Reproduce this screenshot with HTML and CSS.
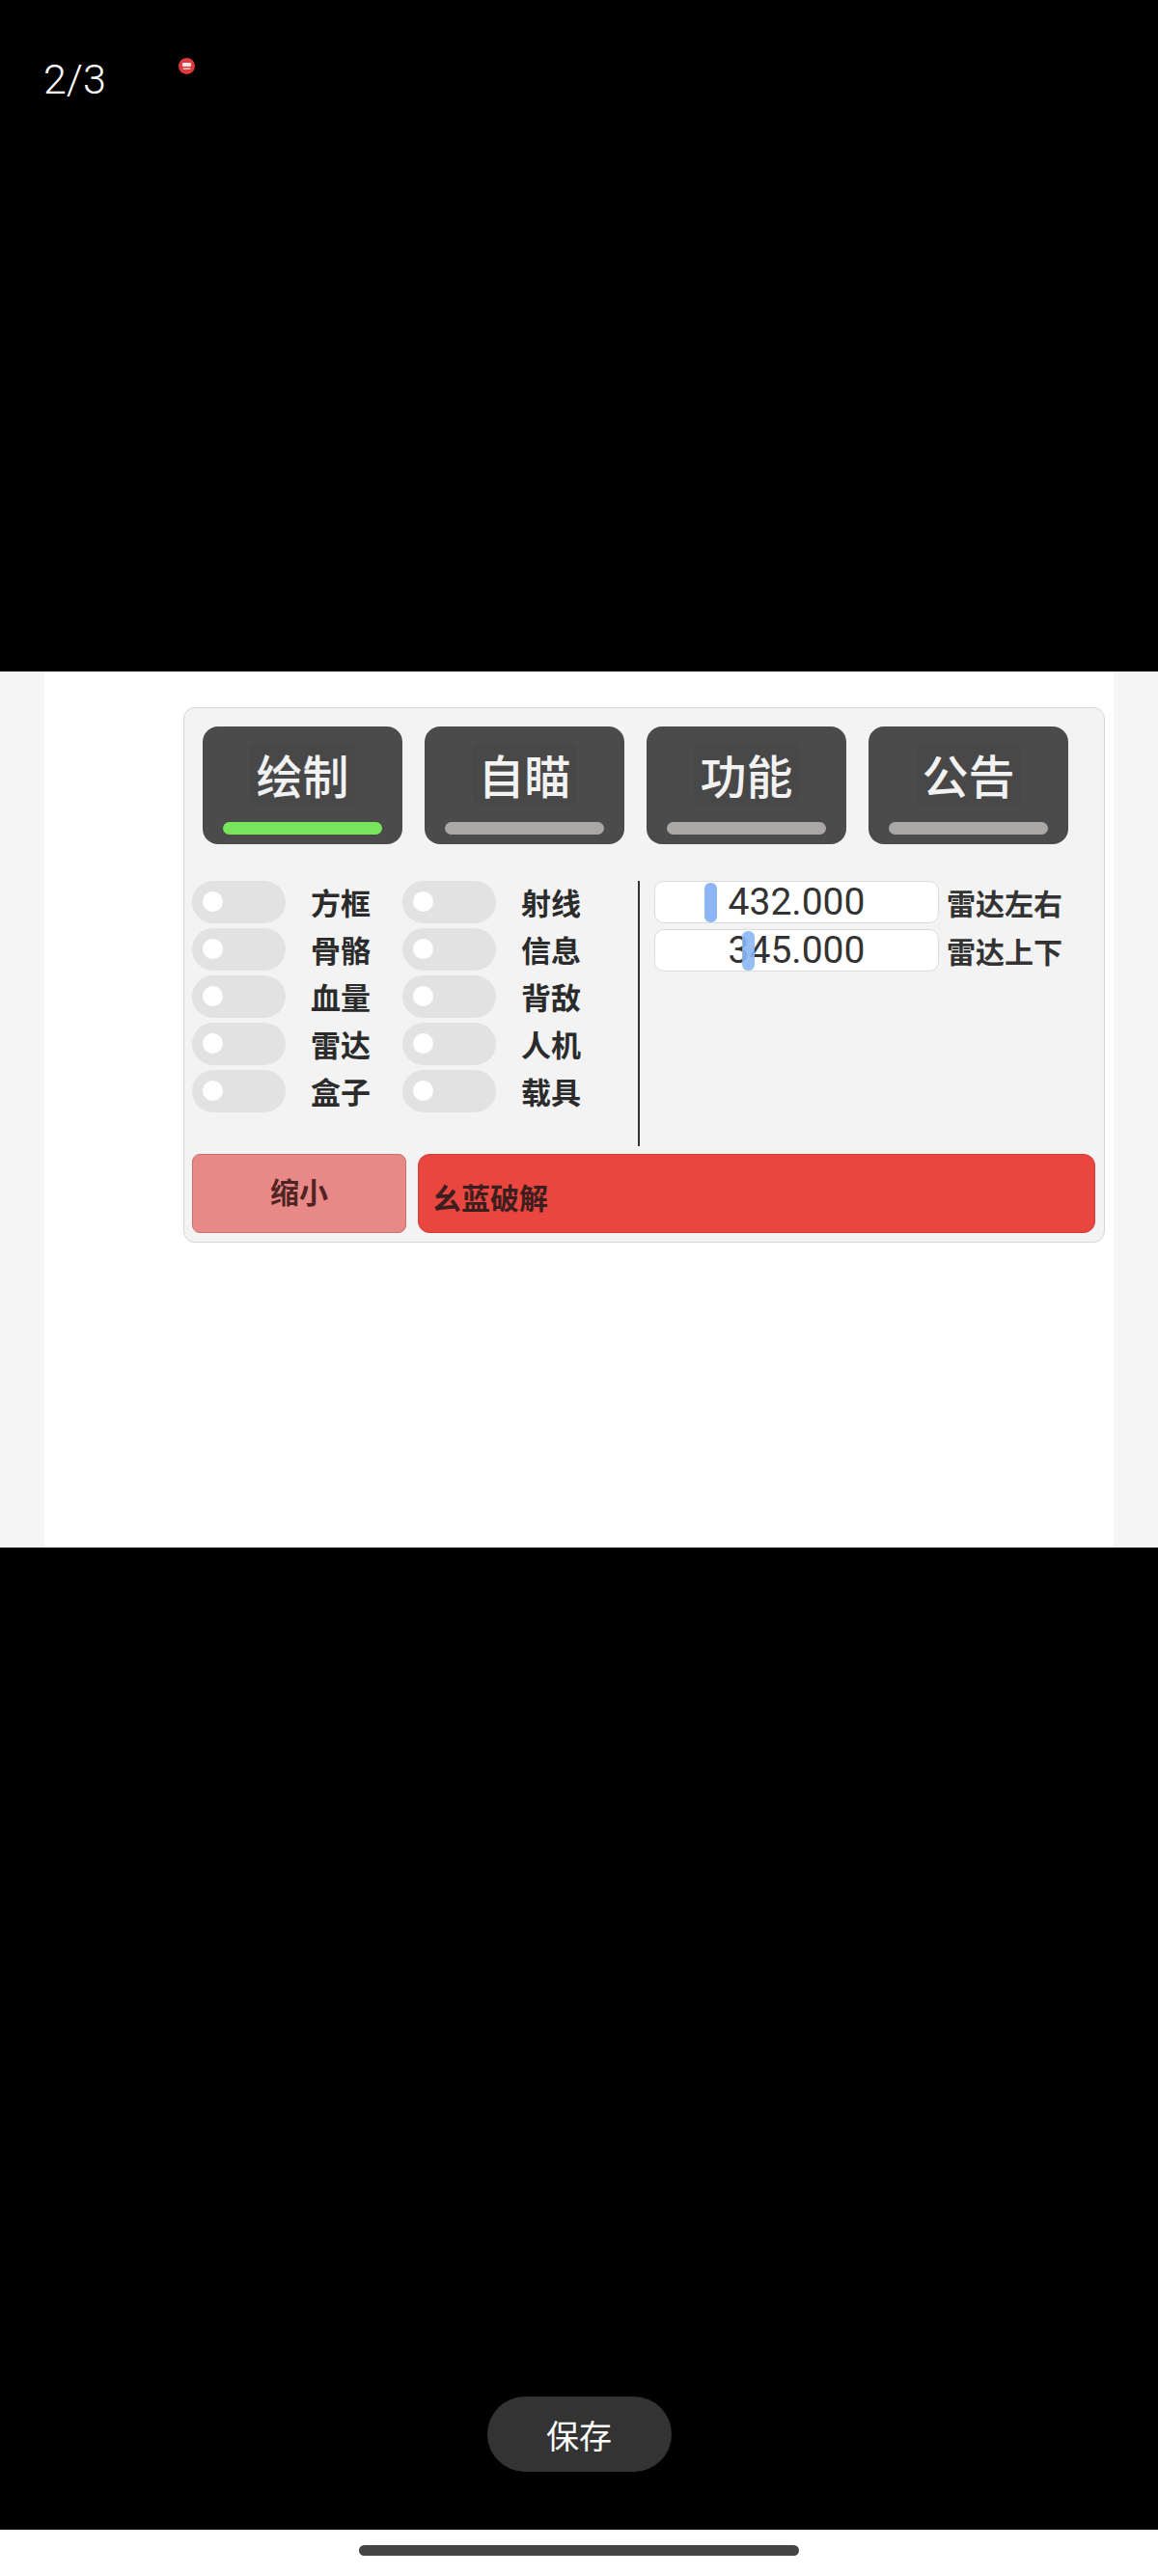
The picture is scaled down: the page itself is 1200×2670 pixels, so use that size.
FILE: index.html
```html
<!DOCTYPE html>
<html lang="zh-CN">
<head>
  <meta charset="UTF-8">
  <title>2/3</title>
  <link rel="stylesheet" href="styles.css">
</head>
<body>
  <header class="viewer-top">
    <span class="page-count">2/3</span>
    <svg class="app-dot" width="17" height="17" viewBox="0 0 17 17">
      <circle cx="8.5" cy="8.5" r="8.5" fill="#e0393c"/>
      <rect x="4" y="5" width="9" height="4" rx="1" fill="#fbe3e3"/>
      <rect x="4.5" y="10.5" width="8" height="1.6" rx="0.8" fill="#f7c9c9"/>
    </svg>
  </header>

  <!-- Screenshot area -->
  <section class="shot">
    <div class="shot-side"></div>
    <div class="shot-main">
      <div class="panel">
        <div class="tabs">
          <div class="tab">
            <span class="tab-label">绘制</span>
            <span class="tab-bar active"></span>
          </div>
          <div class="tab">
            <span class="tab-label">自瞄</span>
            <span class="tab-bar"></span>
          </div>
          <div class="tab">
            <span class="tab-label">功能</span>
            <span class="tab-bar"></span>
          </div>
          <div class="tab">
            <span class="tab-label">公告</span>
            <span class="tab-bar"></span>
          </div>
        </div>

        <div class="panel-body">
          <div class="switches">
            <div class="switch-item"><span class="toggle"></span><span class="switch-label">方框</span></div>
            <div class="switch-item"><span class="toggle"></span><span class="switch-label">射线</span></div>
            <div class="switch-item"><span class="toggle"></span><span class="switch-label">骨骼</span></div>
            <div class="switch-item"><span class="toggle"></span><span class="switch-label">信息</span></div>
            <div class="switch-item"><span class="toggle"></span><span class="switch-label">血量</span></div>
            <div class="switch-item"><span class="toggle"></span><span class="switch-label">背敌</span></div>
            <div class="switch-item"><span class="toggle"></span><span class="switch-label">雷达</span></div>
            <div class="switch-item"><span class="toggle"></span><span class="switch-label">人机</span></div>
            <div class="switch-item"><span class="toggle"></span><span class="switch-label">盒子</span></div>
            <div class="switch-item"><span class="toggle"></span><span class="switch-label">载具</span></div>
          </div>

          <div class="divider"></div>

          <div class="fields">
            <div class="field">
              <div class="field-box">
                <span class="caret caret-one"></span>
                <span class="field-value">432.000</span>
              </div>
              <span class="field-label">雷达左右</span>
            </div>
            <div class="field">
              <div class="field-box">
                <span class="caret caret-two"></span>
                <span class="field-value">345.000</span>
              </div>
              <span class="field-label">雷达上下</span>
            </div>
          </div>
        </div>

        <div class="actions">
          <button class="btn-shrink">缩小</button>
          <button class="btn-title">幺蓝破解</button>
        </div>
      </div>
    </div>
    <div class="shot-side"></div>
  </section>

  <section class="viewer-bottom">
    <button class="save-btn">保存</button>
  </section>

  <footer class="nav-area">
    <span class="home-bar"></span>
  </footer>
</body>
</html>
```

FILE: styles.css
```css
body {
  margin: 0;
  background-color: #000;
  font-family: "Noto Sans CJK SC", "Noto Sans", sans-serif;
}

/* Viewer top */
.viewer-top {
  height: 696px;
  box-sizing: border-box;
  padding: 61px 0 0 45px;
  display: flex;
  align-items: flex-start;
}

.page-count {
  font-family: Roboto, "Noto Sans", sans-serif;
  font-weight: 300;
  font-size: 43px;
  line-height: 43px;
  color: #fff;
}

.app-dot {
  display: block;
  margin: -1px 0 0 75px;
}

/* Screenshot */
.shot {
  height: 908px;
  display: flex;
}

.shot-side {
  width: 46px;
  background-color: #f5f5f5;
}

.shot-main {
  flex: 1;
  background-color: #fff;
  padding: 37px 0 0 144px;
}

.panel {
  width: 955px;
  box-sizing: border-box;
  padding: 19px 9px 9px 8px;
  background-color: #f3f3f3;
  border: 1px solid #d6d6d6;
  border-radius: 12px;
}

.tabs {
  display: flex;
  gap: 23px;
  margin-left: 11px;
}

.tab {
  width: 207px;
  height: 122px;
  box-sizing: border-box;
  padding-top: 18px;
  background-color: #4b4b4b;
  border-radius: 16px;
  display: flex;
  flex-direction: column;
  align-items: center;
}

.tab-label {
  padding: 0 6px;
  font-size: 48px;
  font-weight: 500;
  line-height: 63px;
  color: #f2f2f2;
  background-color: #484848;
  border-radius: 6px;
}

.tab-bar {
  width: 165px;
  height: 13px;
  margin-top: 18px;
  border-radius: 7px;
  background-color: #aaa7a7;
}

.tab-bar.active {
  background-color: #77e65a;
}

.panel-body {
  display: flex;
  margin-top: 38px;
}

/* Switches */
.switches {
  display: grid;
  grid-template-columns: 185px 185px;
  column-gap: 33px;
  row-gap: 5px;
  align-content: start;
}

.switch-item {
  display: flex;
  align-items: center;
  height: 44px;
}

.toggle {
  position: relative;
  width: 97px;
  height: 44px;
  border-radius: 22px;
  background-color: #e2e2e2;
}

.toggle::after {
  content: "";
  position: absolute;
  left: 11px;
  top: 11px;
  width: 21px;
  height: 21px;
  border-radius: 50%;
  background-color: #fff;
}

.switch-label {
  margin-left: 26px;
  font-size: 31px;
  font-weight: 700;
  line-height: 44px;
  color: #2b2b2b;
}

.divider {
  width: 2px;
  height: 275px;
  margin-left: 59px;
  background-color: #333;
}

/* Fields */
.fields {
  margin-left: 15px;
  display: flex;
  flex-direction: column;
  gap: 6px;
}

.field {
  display: flex;
  align-items: center;
}

.field-box {
  position: relative;
  width: 295px;
  height: 44px;
  box-sizing: border-box;
  background-color: #fff;
  border: 1px solid #dcdcdc;
  border-radius: 10px;
  text-align: center;
}

.field-value {
  position: relative;
  font-family: Roboto, "Liberation Sans", sans-serif;
  font-size: 39px;
  line-height: 42px;
  color: #333;
}

.caret {
  position: absolute;
  top: 1px;
  width: 13px;
  height: 41px;
  border-radius: 6px;
  background-color: #8cb6f4;
}

.caret-one {
  left: 51px;
}

.caret-two {
  left: 90px;
  z-index: 1;
  opacity: 0.9;
}

.field-label {
  margin-left: 8px;
  font-size: 30px;
  font-weight: 700;
  color: #333;
}

/* Bottom actions */
.actions {
  display: flex;
  gap: 12px;
  margin-top: 8px;
}

.actions button {
  height: 82px;
  font-family: "Noto Sans CJK SC", sans-serif;
  font-size: 30px;
  font-weight: 700;
  cursor: pointer;
}

.btn-shrink {
  width: 222px;
  padding-bottom: 8px;
  background-color: #e98987;
  border: 1px solid #c96f6d;
  border-radius: 8px;
  color: #4e2424;
}

.btn-title {
  width: 702px;
  padding: 5px 0 0 14px;
  text-align: left;
  background-color: #e8463f;
  border: 1px solid #d23e38;
  border-radius: 12px;
  color: #3d1e1e;
}

/* Viewer bottom */
.viewer-bottom {
  height: 1018px;
  box-sizing: border-box;
  padding-top: 880px;
  display: flex;
  justify-content: center;
}

.save-btn {
  width: 191px;
  height: 78px;
  border: none;
  border-radius: 39px;
  background-color: #333;
  color: #fff;
  font-family: "Noto Sans CJK SC", sans-serif;
  font-size: 34px;
}

.nav-area {
  height: 48px;
  box-sizing: border-box;
  padding-top: 16px;
  background-color: #fff;
  display: flex;
  justify-content: center;
}

.home-bar {
  width: 456px;
  height: 11px;
  border-radius: 6px;
  background-color: #444;
}
```
